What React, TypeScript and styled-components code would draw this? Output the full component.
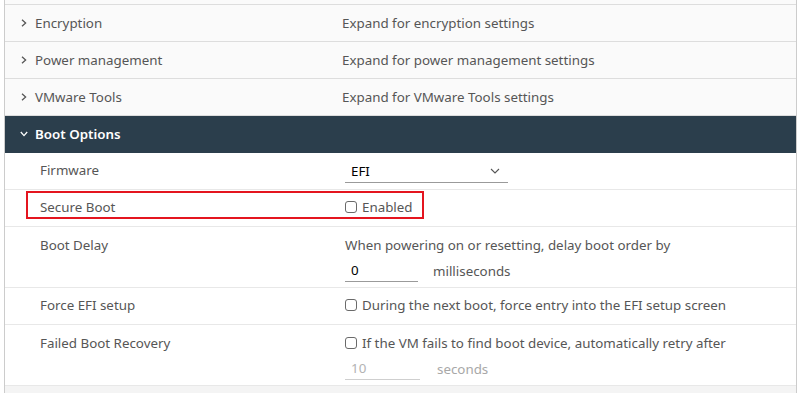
import styled, { createGlobalStyle } from "styled-components";

const GlobalStyle = createGlobalStyle`
  body {
    margin: 0;
    background: #ffffff;
    font-family: "Noto Sans", "Liberation Sans", sans-serif;
    font-size: 13.35px;
  }
`;

const Stack = styled.div`
  margin: 0 3px 0 4px;
  border-left: 1px solid #cccccc;
  border-right: 1px solid #cccccc;
  height: 393px;
  overflow: hidden;
  background: #fafafa;
`;

const CutRow = styled.div`
  height: 5px;
  border-bottom: 1px solid #dddddd;
  box-sizing: border-box;
`;

const BlockRow = styled.div<{ $open?: boolean }>`
  display: grid;
  grid-template-columns: 322px 1fr;
  align-items: center;
  height: 37px;
  box-sizing: border-box;
  padding-left: 15px;
  background: ${(p) => (p.$open ? "#2b3e4c" : "#fafafa")};
  border-bottom: 1px solid ${(p) => (p.$open ? "#2b3e4c" : "#dddddd")};
  color: ${(p) => (p.$open ? "#ffffff" : "#565656")};
  font-weight: ${(p) => (p.$open ? 600 : 400)};
`;

const Title = styled.div`
  display: flex;
  align-items: center;
  gap: 7px;
`;

const Desc = styled.div`
  color: #565656;
`;

const Body = styled.div`
  background: #ffffff;
`;

const Field = styled.div<{ $tall?: boolean }>`
  display: grid;
  grid-template-columns: 305px 1fr;
  align-items: start;
  height: ${(p) => (p.$tall ? "61px" : "37px")};
  box-sizing: border-box;
  padding: ${(p) => (p.$tall ? "9px" : "8px")} 0 0 35px;
  border-bottom: 1px solid #e8e8e8;
  color: #565656;
`;

const Label = styled.div`
  line-height: 18px;
`;

const Value = styled.div<{ $gap?: number }>`
  display: flex;
  flex-direction: column;
  gap: ${(p) => p.$gap ?? 6}px;
`;

const Line = styled.div`
  display: flex;
  align-items: center;
  line-height: 18px;
`;

const Highlighted = styled.div`
  height: 37px;
  box-sizing: border-box;
  padding-top: 1px;
  border-bottom: 1px solid #e8e8e8;
`;

const RedBox = styled.div`
  display: grid;
  grid-template-columns: 305px auto;
  align-items: center;
  width: 398px;
  height: 28px;
  box-sizing: border-box;
  margin-left: 21px;
  padding: 3px 0 0 12px;
  border: 2px solid #e4151f;
  color: #565656;
`;

const Select = styled.div`
  display: flex;
  align-items: center;
  justify-content: space-between;
  width: 163px;
  height: 22px;
  box-sizing: border-box;
  padding: 0 8px 2px 6px;
  border-bottom: 1px solid #9a9a9a;
  color: #000000;
`;

const NumInput = styled.div<{ $disabled?: boolean }>`
  width: ${(p) => (p.$disabled ? "75px" : "73px")};
  height: 22px;
  box-sizing: border-box;
  padding: 1px 0 0 6px;
  margin-right: ${(p) => (p.$disabled ? "17px" : "15px")};
  border-bottom: 1px solid ${(p) => (p.$disabled ? "#cfcfcf" : "#9a9a9a")};
  color: ${(p) => (p.$disabled ? "#b3b3b3" : "#000000")};
`;

const Unit = styled.span<{ $disabled?: boolean }>`
  color: ${(p) => (p.$disabled ? "#a8a8a8" : "#565656")};
`;

const Box = styled.span`
  display: inline-block;
  width: 12px;
  height: 12px;
  box-sizing: border-box;
  border: 1px solid #6a6a6a;
  border-radius: 3px;
  margin-right: 5px;
  background: #ffffff;
`;

const Foot = styled.div`
  height: 10px;
  background: #f4f4f4;
`;

function Chevron({ down, color }: { down?: boolean; color: string }) {
  return (
    <svg width="8" height="8" viewBox="0 0 8 8" style={{ transform: down ? "rotate(90deg)" : undefined }}>
      <path d="M2 0.8 L5.6 4 L2 7.2" fill="none" stroke={color} strokeWidth="1.3" />
    </svg>
  );
}

function Caret() {
  return (
    <svg width="10" height="6" viewBox="0 0 10 6">
      <path d="M1 1 L5 5 L9 1" fill="none" stroke="#565656" strokeWidth="1.1" />
    </svg>
  );
}

const collapsed = [
  { title: "Encryption", desc: "Expand for encryption settings" },
  { title: "Power management", desc: "Expand for power management settings" },
  { title: "VMware Tools", desc: "Expand for VMware Tools settings" },
];

export default function App() {
  return (
    <>
      <GlobalStyle />
      <Stack>
        <CutRow />
        {collapsed.map((row) => (
          <BlockRow key={row.title}>
            <Title>
              <Chevron color="#565656" />
              {row.title}
            </Title>
            <Desc>{row.desc}</Desc>
          </BlockRow>
        ))}
        <BlockRow $open>
          <Title>
            <Chevron down color="#ffffff" />
            Boot Options
          </Title>
          <span />
        </BlockRow>
        <Body>
          <Field>
            <Label>Firmware</Label>
            <Value>
              <Select>
                EFI
                <Caret />
              </Select>
            </Value>
          </Field>
          <Highlighted>
            <RedBox>
              <Label>Secure Boot</Label>
              <Line>
                <Box />
                Enabled
              </Line>
            </RedBox>
          </Highlighted>
          <Field $tall>
            <Label>Boot Delay</Label>
            <Value>
              <Line>When powering on or resetting, delay boot order by</Line>
              <Line>
                <NumInput>0</NumInput>
                <Unit>milliseconds</Unit>
              </Line>
            </Value>
          </Field>
          <Field>
            <Label>Force EFI setup</Label>
            <Value>
              <Line>
                <Box />
                During the next boot, force entry into the EFI setup screen
              </Line>
            </Value>
          </Field>
          <Field $tall>
            <Label>Failed Boot Recovery</Label>
            <Value>
              <Line>
                <Box />
                If the VM fails to find boot device, automatically retry after
              </Line>
              <Line>
                <NumInput $disabled>10</NumInput>
                <Unit $disabled>seconds</Unit>
              </Line>
            </Value>
          </Field>
          <Foot />
        </Body>
      </Stack>
    </>
  );
}
